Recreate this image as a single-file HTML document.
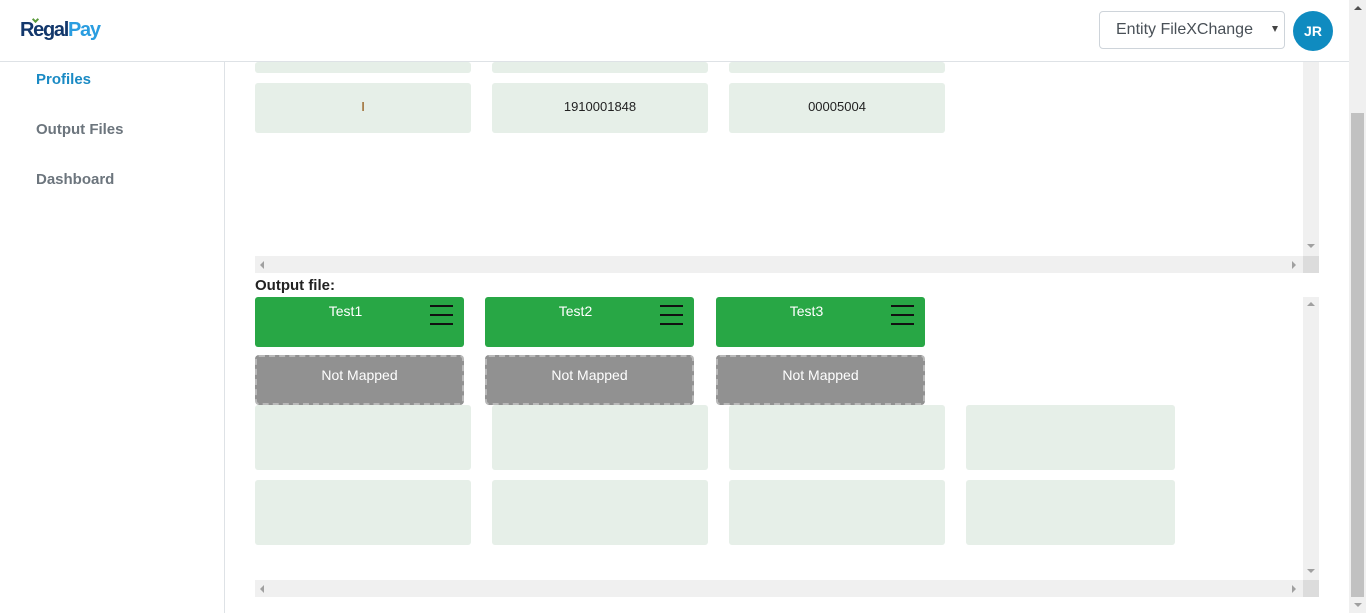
<!DOCTYPE html>
<html><head><meta charset="utf-8"><style>
*{box-sizing:border-box;margin:0;padding:0}
body{width:1366px;height:613px;overflow:hidden;background:#fff;font-family:"Liberation Sans",Arial,sans-serif;position:relative}
.a{position:absolute}
.hdr{left:0;top:0;width:1349px;height:62px;border-bottom:1px solid #dee2e6;background:#fff}
.logo{left:20px;top:19px;font-size:20px;font-weight:bold;letter-spacing:-1.3px}
.side{left:224px;top:62px;width:1px;height:551px;background:#dee2e6}
.nav{left:36px;font-size:15px;font-weight:bold;color:#6c757d}
.sel{left:1099px;top:11px;width:186px;height:38px;border:1px solid #ced4da;border-radius:4px;font-size:16px;color:#495057;padding:9px 0 0 16px}
.av{left:1293px;top:11px;width:40px;height:40px;border-radius:50%;background:#0f8bc0;color:#fff;font-weight:bold;font-size:14px;text-align:center;line-height:40px}
.lc{background:#e6efe8;border-radius:3px;font-size:13px;color:#222;text-align:center}
.gc{background:#28a745;border-radius:3px;color:#fff;font-size:14px;text-align:center;padding-top:6px;padding-right:28px;width:209px;height:50px}
.gc i{position:absolute;right:11px;width:23px;height:2px;background:#111}
.nm{width:209px;height:50px;background:#919191;border:2px dashed #b9b9b9;border-radius:4px;color:#fff;font-size:14px;text-align:center;line-height:36px}
.tr{background:#f0f0f0}
.tri{width:0;height:0;border:4px solid transparent}
</style></head><body>
<div class="a hdr"></div>
<div class="a logo"><span style="color:#12376b">Regal</span><span style="color:#2a9de0">Pay</span></div>
<div class="a" style="left:33px;top:17px;width:5px;height:5px;border-left:2px solid #5a9a3a;border-bottom:2px solid #5a9a3a;transform:rotate(-45deg)"></div>
<div class="a sel">Entity FileXChange</div>
<div class="a tri" style="left:1272px;top:26px;border-top:6px solid #444;border-width:6px 3px 0 3px"></div>
<div class="a av">JR</div>
<div class="a side"></div>
<div class="a nav" style="top:71px;color:#1a8ac4">Profiles</div>
<div class="a nav" style="top:121px">Output Files</div>
<div class="a nav" style="top:171px">Dashboard</div>

<div class="a lc" style="left:255px;top:62px;width:216px;height:11px"></div>
<div class="a lc" style="left:492px;top:62px;width:216px;height:11px"></div>
<div class="a lc" style="left:729px;top:62px;width:216px;height:11px"></div>
<div class="a lc" style="left:255px;top:83px;width:216px;height:50px;line-height:48px;color:#8a4a00">I</div>
<div class="a lc" style="left:492px;top:83px;width:216px;height:50px;line-height:48px">1910001848</div>
<div class="a lc" style="left:729px;top:83px;width:216px;height:50px;line-height:48px">00005004</div>
<div class="a tr" style="left:1303px;top:62px;width:16px;height:194px"></div>
<div class="a tri" style="left:1307px;top:244px;border-top:4px solid #a0a0a0;border-bottom:0"></div>
<div class="a tr" style="left:255px;top:256px;width:1048px;height:17px"></div>
<div class="a" style="left:1303px;top:256px;width:16px;height:17px;background:#dcdcdc"></div>
<div class="a tri" style="left:260px;top:261px;border-right:4px solid #a0a0a0;border-left:0"></div>
<div class="a tri" style="left:1292px;top:261px;border-left:4px solid #a0a0a0;border-right:0"></div>

<div class="a" style="left:255px;top:277px;font-size:15px;font-weight:bold;color:#222">Output file:</div>

<div class="a gc" style="left:255px;top:297px">Test1<i style="top:8px"></i><i style="top:17px"></i><i style="top:26px"></i></div>
<div class="a gc" style="left:485px;top:297px">Test2<i style="top:8px"></i><i style="top:17px"></i><i style="top:26px"></i></div>
<div class="a gc" style="left:716px;top:297px">Test3<i style="top:8px"></i><i style="top:17px"></i><i style="top:26px"></i></div>
<div class="a nm" style="left:255px;top:355px">Not Mapped</div>
<div class="a nm" style="left:485px;top:355px">Not Mapped</div>
<div class="a nm" style="left:716px;top:355px">Not Mapped</div>
<div class="a lc" style="left:255px;top:405px;width:216px;height:65px"></div>
<div class="a lc" style="left:492px;top:405px;width:216px;height:65px"></div>
<div class="a lc" style="left:729px;top:405px;width:216px;height:65px"></div>
<div class="a lc" style="left:966px;top:405px;width:209px;height:65px"></div>
<div class="a lc" style="left:255px;top:480px;width:216px;height:65px"></div>
<div class="a lc" style="left:492px;top:480px;width:216px;height:65px"></div>
<div class="a lc" style="left:729px;top:480px;width:216px;height:65px"></div>
<div class="a lc" style="left:966px;top:480px;width:209px;height:65px"></div>
<div class="a tr" style="left:1303px;top:297px;width:16px;height:283px"></div>
<div class="a tri" style="left:1307px;top:302px;border-bottom:4px solid #a0a0a0;border-top:0"></div>
<div class="a tri" style="left:1307px;top:569px;border-top:4px solid #a0a0a0;border-bottom:0"></div>
<div class="a tr" style="left:255px;top:580px;width:1048px;height:17px"></div>
<div class="a" style="left:1303px;top:580px;width:16px;height:17px;background:#dcdcdc"></div>
<div class="a tri" style="left:260px;top:585px;border-right:4px solid #a0a0a0;border-left:0"></div>
<div class="a tri" style="left:1292px;top:585px;border-left:4px solid #a0a0a0;border-right:0"></div>

<div class="a tr" style="left:1349px;top:0;width:17px;height:613px"></div>
<div class="a" style="left:1351px;top:113px;width:13px;height:484px;background:#c1c1c1"></div>
<div class="a tri" style="left:1354px;top:6px;border-bottom:4px solid #505050;border-top:0"></div>
<div class="a tri" style="left:1354px;top:603px;border-top:4px solid #a0a0a0;border-bottom:0"></div>
</body></html>
